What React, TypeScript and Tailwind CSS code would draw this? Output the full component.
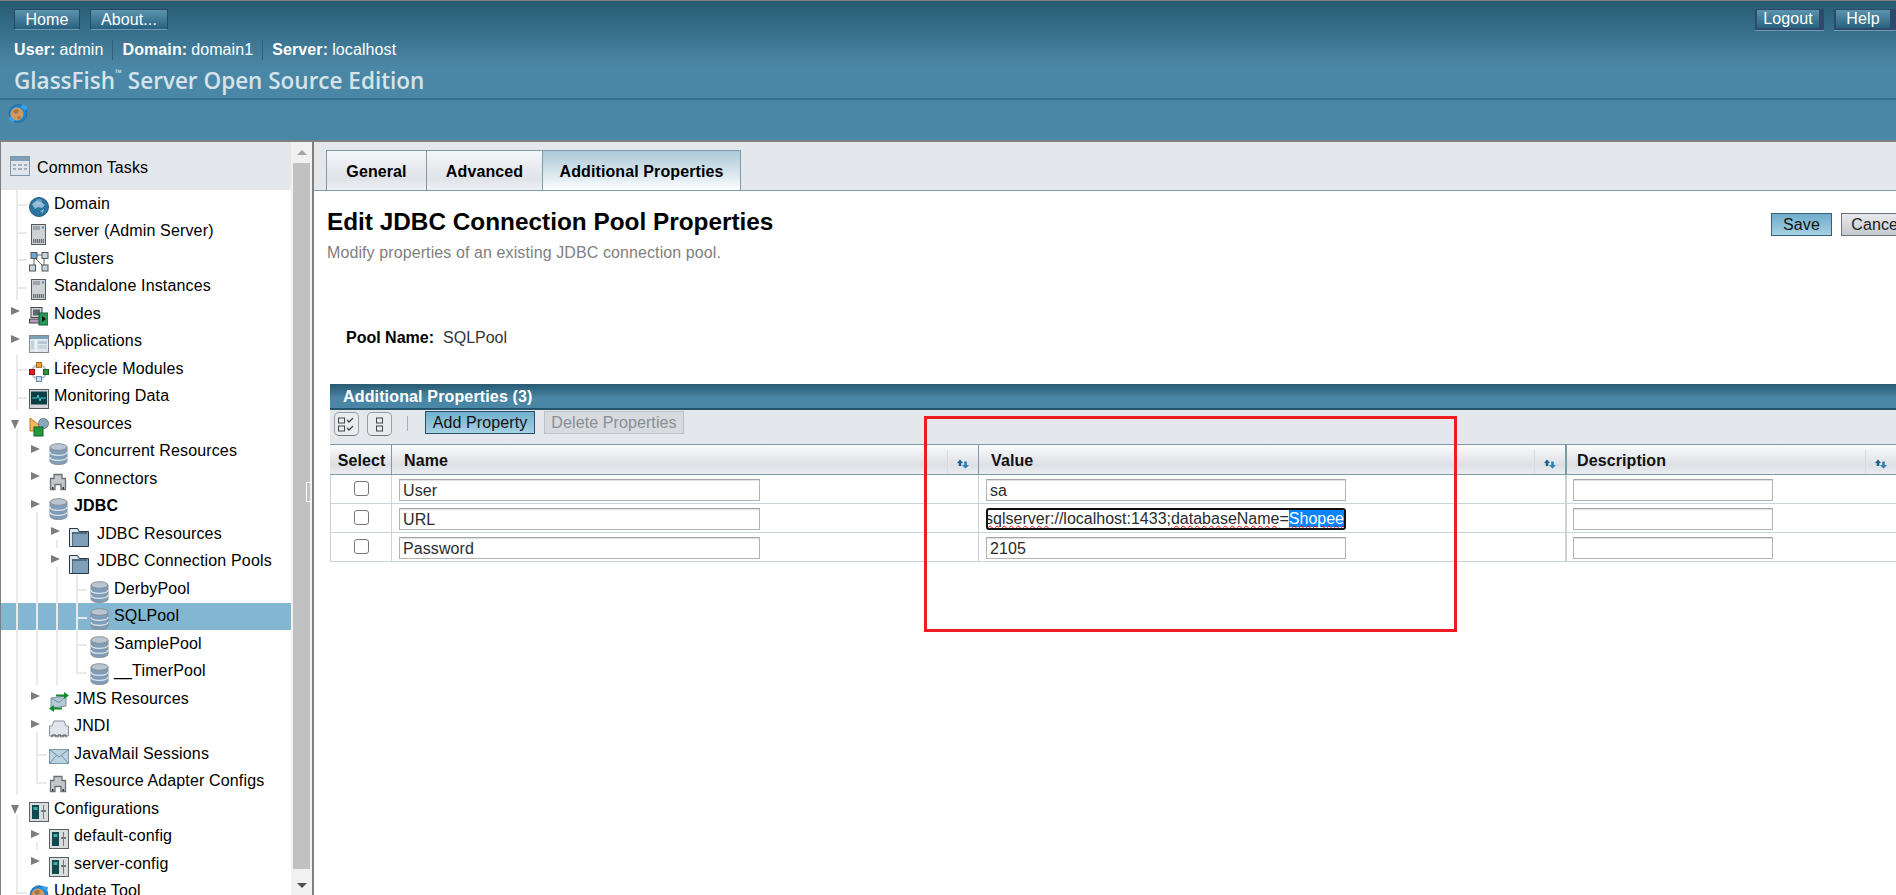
import React from "react";

const FONT = "font-['Liberation_Sans',Arial,sans-serif]";

function Db() {
  return (
    <svg width="19" height="22" viewBox="0 0 19 22">
      <path d="M1 4v14c0 2 3.500 3.500 8.500 3.500S18 20 18 18V4z" fill="#7f9cb8" stroke="#8a8f94" />
      <ellipse cx="9.500" cy="4" rx="8.500" ry="3.300" fill="#b8c6d4" stroke="#8a8f94" />
      <path d="M1 9c0 2 3.500 3.300 8.500 3.300S18 11 18 9M1 14c0 2 3.500 3.300 8.500 3.300S18 16 18 14" fill="none" stroke="#dde5ec" strokeWidth="1.200" />
    </svg>
  );
}
function Globe() {
  return (
    <svg width="20" height="20" viewBox="0 0 20 20">
      <circle cx="10" cy="10" r="9.500" fill="#2c74a0" stroke="#245d80" />
      <path d="M3 7l4-3 5 1 4 3-3 3-4-1-3 2zM11 14l4-2-1 4z" fill="#8fbbd4" />
      <circle cx="10" cy="5" r="3" fill="#a8cce0" opacity=".5" />
    </svg>
  );
}
function ServerBox() {
  return (
    <svg width="15" height="21" viewBox="0 0 15 21" className="ml-[2px]">
      <rect x=".5" y=".5" width="14" height="20" fill="#cfd2d5" stroke="#55595d" />
      <path d="M2 3h7M2 5h7" stroke="#777" />
      <rect x="11" y="2.500" width="2" height="2" fill="#4a87c0" />
      <rect x="2" y="15" width="11" height="4" fill="#6d7175" />
      <path d="M3.500 15v4M5.500 15v4M7.500 15v4M9.500 15v4M11.500 15v4" stroke="#c8c8c8" strokeWidth=".7" />
    </svg>
  );
}
function ClustersI() {
  return (
    <svg width="20" height="20" viewBox="0 0 20 20">
      <path d="M5 6v8M7 3h7M6 6l8 8M15 6v8" stroke="#666" fill="none" />
      <rect x="2" y=".5" width="6" height="6" fill="#6da4d0" stroke="#555" />
      <rect x="13" y=".5" width="6" height="6" fill="#c8d4dc" stroke="#555" />
      <rect x=".5" y="13" width="6" height="6" fill="#c8d4dc" stroke="#555" />
      <rect x="13" y="13" width="6" height="6" fill="#c8d4dc" stroke="#555" />
    </svg>
  );
}
function NodesI() {
  return (
    <svg width="19" height="19" viewBox="0 0 19 19">
      <rect x="2" y=".5" width="11" height="10" fill="#d4d6d8" stroke="#444" />
      <rect x="4" y="2.500" width="7" height="6" fill="#5c6670" />
      <rect x=".5" y="12" width="12" height="4" fill="#b49ac4" stroke="#444" />
      <rect x="10" y="6" width="9" height="12" fill="#28995a" stroke="#175c36" />
      <path d="M13 9l4 3-4 3z" fill="#111" />
    </svg>
  );
}
function AppsI() {
  return (
    <svg width="20" height="18" viewBox="0 0 20 18">
      <rect x=".5" y=".5" width="19" height="17" fill="#dfe6ec" stroke="#858a8f" />
      <rect x="1" y="1" width="18" height="3" fill="#7c9fba" />
      <path d="M7 4v13" stroke="#fff" />
      <rect x="2" y="6" width="3" height="8" fill="#c2d0da" />
      <rect x="9" y="6" width="9" height="3" fill="#b6c9d8" />
      <rect x="9" y="10" width="9" height="4" fill="#c8d6e0" />
    </svg>
  );
}
function LifecycleI() {
  return (
    <svg width="20" height="20" viewBox="0 0 20 20">
      <circle cx="10" cy="10" r="7" fill="none" stroke="#b8c4cc" strokeWidth="2" />
      <rect x="7.500" y=".5" width="5" height="5" fill="#f0a030" stroke="#a87020" />
      <rect x=".5" y="7.500" width="5" height="5" fill="#e02020" stroke="#901010" />
      <rect x="14.500" y="7.500" width="5" height="5" fill="#309040" stroke="#206028" />
      <rect x="7.500" y="14.500" width="5" height="5" fill="#c8dce8" stroke="#6a8ea8" />
    </svg>
  );
}
function MonitorI() {
  return (
    <svg width="20" height="20" viewBox="0 0 20 20">
      <rect x=".5" y=".5" width="19" height="19" fill="#d2d5d6" stroke="#55595c" />
      <rect x="2" y="2.500" width="16" height="13" fill="#0c3c44" />
      <path d="M3 9h5l1-3 2 6 1-3h5" fill="none" stroke="#40d0d0" />
    </svg>
  );
}
function ResourcesI() {
  return (
    <svg width="20" height="20" viewBox="0 0 20 20">
      <path d="M1 1l9 7v6H1z" fill="#f0b860" stroke="#b87820" />
      <circle cx="14.500" cy="6.500" r="5" fill="#8aa8c0" stroke="#6a7a88" />
      <rect x="5" y="10" width="9" height="9" fill="#1e9a3c" stroke="#106024" />
    </svg>
  );
}
function ConnectorI() {
  return (
    <svg width="18" height="18" viewBox="0 0 18 18">
      <path d="M5 1.500h8v4h3.500v11h-4.500v-5H6v5H1.500v-11H5z" fill="#c4c8cc" stroke="#6c7074" strokeWidth="1.300" />
      <path d="M3 15h1.500M13.500 15H15" stroke="#333" strokeWidth="2" />
    </svg>
  );
}
function FolderI() {
  return (
    <svg width="20" height="20" viewBox="0 0 20 20">
      <path d="M.5 19.500V1.500h8l2 3h9v15z" fill="#7f9fb8" stroke="#26384a" />
      <path d="M3 19V6h15" fill="none" stroke="#26384a" />
      <path d="M1 2h7l1.500 3H3v14H1z" fill="#dfe6ea" />
    </svg>
  );
}
function JmsI() {
  return (
    <svg width="20" height="20" viewBox="0 0 20 20">
      <path d="M2 6l15-2v10L2 16z" fill="#b5cad8" stroke="#7a8f9e" />
      <path d="M2.500 6.500l7.500 4 6.500-6" fill="none" stroke="#7a8f9e" />
      <path d="M7 2.500h8V0l5 3.500-5 3.500V4.500H7z" fill="#128a2a" />
      <path d="M13 15.500H5V13L0 16.500 5 20v-2.500h8z" fill="#128a2a" />
    </svg>
  );
}
function JndiI() {
  return (
    <svg width="20" height="19" viewBox="0 0 20 19">
      <path d="M5 1h10l2 5h2.500v10H.5V6H3z" fill="#dfe5ea" stroke="#8a9198" />
      <path d="M3 17.500V15h4v2.500M9 17.500V15h3v2.500M14 17.500V15h3v2.500" fill="none" stroke="#555" />
    </svg>
  );
}
function MailI() {
  return (
    <svg width="20" height="15" viewBox="0 0 20 15">
      <rect x=".5" y=".5" width="19" height="14" fill="#bcd2e0" stroke="#7a98ac" />
      <path d="M1 1l9 7 9-7M1 14l6.500-7.500M19 14l-6.500-7.500" fill="none" stroke="#6f8da2" />
    </svg>
  );
}
function ConfigI() {
  return (
    <svg width="20" height="20" viewBox="0 0 20 20">
      <rect x=".5" y=".5" width="19" height="19" fill="#d9dcdd" stroke="#5c6063" />
      <rect x="3" y="3" width="7" height="14" fill="#0e4a50" />
      <rect x="4.500" y="5" width="4" height="3" fill="#3ab0a8" />
      <path d="M14.500 3v14" stroke="#777" />
      <rect x="12" y="8" width="5" height="2" fill="#777" />
    </svg>
  );
}
function UpdateI() {
  return (
    <svg width="20" height="19" viewBox="0 0 20 19">
      <circle cx="10" cy="9.500" r="8.800" fill="#1b87d6" stroke="#1a5f94" strokeWidth=".8" />
      <circle cx="9" cy="10" r="6.500" fill="#cf9a62" />
      <path d="M5 7l3-2 3 1-1 3-3 1zM9 13l3-1 1 2-3 1z" fill="#a87440" />
      <path d="M14 1l5 1-1 5-2-2-3-1zM5 18l-4-2 1-4 2 2 3 2z" fill="#35a5ec" />
    </svg>
  );
}
function TasksI() {
  return (
    <svg width="20" height="20" viewBox="0 0 20 20">
      <rect x=".5" y=".5" width="19" height="19" fill="#dfe5ea" stroke="#7d97aa" />
      <rect x="1" y="1" width="18" height="4" fill="#7f9fb8" />
      <path d="M3 8h3v2H3zM8 8h4v2H8zM14 8h3v2h-3zM3 12h3v2H3zM8 12h4v2H8zM14 12h3v2h-3z" fill="#a4aeb6" />
    </svg>
  );
}
function Sort() {
  return (
    <svg width="12" height="10" viewBox="0 0 12 10">
      <path d="M3 .5L6 4H4.300v3H1.700V4H0z" fill="#1a5f92" />
      <path d="M8.500 9.500L12 6h-2.200V2.500H7.200V6H5z" fill="#2a80b8" />
    </svg>
  );
}

type R = {
  t: string;
  l: number;
  i: React.ReactNode;
  a?: "r" | "d";
  v?: number[];
  h?: number[];
  b?: number[];
  tick?: number;
  bold?: boolean;
  sel?: boolean;
};

const rows: R[] = [
  { t: "Domain", l: 0, i: <Globe />, v: [15], tick: 15 },
  { t: "server (Admin Server)", l: 0, i: <ServerBox />, v: [15], tick: 15 },
  { t: "Clusters", l: 0, i: <ClustersI />, v: [15], tick: 15 },
  { t: "Standalone Instances", l: 0, i: <ServerBox />, v: [15], tick: 15 },
  { t: "Nodes", l: 0, i: <NodesI />, a: "r" },
  { t: "Applications", l: 0, i: <AppsI />, a: "r" },
  { t: "Lifecycle Modules", l: 0, i: <LifecycleI />, v: [15], tick: 15 },
  { t: "Monitoring Data", l: 0, i: <MonitorI />, v: [15], tick: 15 },
  { t: "Resources", l: 0, i: <ResourcesI />, a: "d", b: [15] },
  { t: "Concurrent Resources", l: 1, i: <Db />, a: "r", v: [15] },
  { t: "Connectors", l: 1, i: <ConnectorI />, a: "r", v: [15] },
  { t: "JDBC", l: 1, i: <Db />, a: "r", v: [15], b: [35], bold: true },
  { t: "JDBC Resources", l: 2, i: <FolderI />, a: "r", v: [15, 35], b: [55] },
  { t: "JDBC Connection Pools", l: 2, i: <FolderI />, a: "r", v: [15, 35], b: [55] },
  { t: "DerbyPool", l: 3, i: <Db />, v: [15, 35, 55, 75], tick: 75 },
  { t: "SQLPool", l: 3, i: <Db />, v: [15, 35, 55, 75], tick: 75, sel: true },
  { t: "SamplePool", l: 3, i: <Db />, v: [15, 35, 55, 75], tick: 75 },
  { t: "__TimerPool", l: 3, i: <Db />, v: [15, 35, 55], h: [75], tick: 75 },
  { t: "JMS Resources", l: 1, i: <JmsI />, a: "r", v: [15] },
  { t: "JNDI", l: 1, i: <JndiI />, a: "r", v: [15], b: [35] },
  { t: "JavaMail Sessions", l: 1, i: <MailI />, v: [15, 35], tick: 35 },
  { t: "Resource Adapter Configs", l: 1, i: <ConnectorI />, v: [15], h: [35], tick: 35 },
  { t: "Configurations", l: 0, i: <ConfigI />, a: "d", v: [], b: [15] },
  { t: "default-config", l: 1, i: <ConfigI />, a: "r", v: [15], b: [35] },
  { t: "server-config", l: 1, i: <ConfigI />, a: "r", v: [15] },
  { t: "Update Tool", l: 0, i: <UpdateI />, h: [15], tick: 15 },
];

const PAD = ["pl-[28px]", "pl-[48px]", "pl-[68px]", "pl-[89px]"];
const BOX = ["w-[25px]", "w-[25px]", "w-[28px]", "w-[24px]"];
const ARROW = ["left-[10px]", "left-[30px]", "left-[50px]", "left-[70px]"];
const LINE = "absolute w-[2px] bg-[#e7e9eb]";

function TreeRow({ r }: { r: R }) {
  return (
    <div className={`relative h-[27.5px] shrink-0 flex items-center ${PAD[r.l]} ${r.sel ? "bg-[#83b7d1]" : ""}`}>
      {r.v?.map((x) => (
        <span key={x} className={`${LINE} top-0 bottom-0`} style={{ left: x }} />
      ))}
      {r.h?.map((x) => (
        <span key={x} className={`${LINE} top-0 h-[15px]`} style={{ left: x }} />
      ))}
      {r.b?.map((x) => (
        <span key={x} className={`${LINE} bottom-0 h-[8px]`} style={{ left: x }} />
      ))}
      {r.tick !== undefined && (
        <span className="absolute h-[2px] top-[14px] bg-[#e7e9eb] w-[11px]" style={{ left: r.tick }} />
      )}
      {r.a === "r" && (
        <span className={`absolute ${ARROW[r.l]} top-[7px] border-l-[9px] border-l-[#7d7d7d] border-y-[4.500px] border-y-transparent`} />
      )}
      {r.a === "d" && (
        <span className={`absolute ${ARROW[r.l]} top-[10px] border-t-[9px] border-t-[#7d7d7d] border-x-[4.500px] border-x-transparent`} />
      )}
      <span className={`relative ${BOX[r.l]} shrink-0 translate-y-[3px] flex items-center`}>{r.i}</span>
      <span className={`text-[16px] tracking-[0.15px] whitespace-nowrap text-black ${r.bold ? "font-bold" : ""}`}>{r.t}</span>
    </div>
  );
}

function HeadBtn({ t, w }: { t: string; w: string }) {
  return (
    <button className={`${w} h-[21px] border border-[#2c4560] border-b-[#6d9ab5] bg-[linear-gradient(#5b94ae,#28607f)] text-white text-[16px] leading-[19px] text-center`}>
      {t}
    </button>
  );
}

function HeadBtnDark({ t, w, inner }: { t: string; w: string; inner: string }) {
  return (
    <div className={`${w} h-[22px] bg-[#30496a] border-b border-[#6d9ab5] flex pl-[2px] pt-[1px]`}>
      <button className={`${inner} h-[18px] bg-[linear-gradient(#5b94ae,#28607f)] text-white text-[16px] leading-[18px] text-center`}>
        {t}
      </button>
    </div>
  );
}

function Tab({ t, w, active }: { t: string; w: string; active?: boolean }) {
  return (
    <div
      className={`${w} h-[40px] border-l border-t border-[#7b9ca8] flex items-center justify-center font-bold text-[16px] text-black pt-[2px] ${
        active ? "bg-[linear-gradient(#acc8d8,#e6f0f4_75%,#ffffff)] border-r" : "bg-[linear-gradient(#f6f7f9,#dfe2e7_70%,#eef0f3)]"
      }`}
    >
      {t}
    </div>
  );
}

function HeaderCell({ t, className, pad, sort }: { t: string; className?: string; pad?: string; sort?: boolean }) {
  return (
    <div className={`flex items-stretch justify-between font-bold text-[16px] text-[#111] ${className ?? ""}`}>
      <span className={`self-center pt-[2px] ${pad ?? "pl-[12px]"}`}>{t}</span>
      {sort && (
        <span className="mt-[5px] w-[31px] border-l border-[#d8dbe0] flex items-center justify-center shrink-0 pt-[3px]">
          <Sort />
        </span>
      )}
    </div>
  );
}

function TextBox({ v, className }: { v?: string; className?: string }) {
  return (
    <input
      readOnly
      defaultValue={v}
      className={`h-[22px] border border-[#b2b4b6] border-t-[#a2a4a6] bg-white pl-[3px] pt-[1px] text-[16px] text-[#2b2b2b] shadow-[inset_0_1px_1px_#e0e0e0] outline-none ${className ?? ""}`}
    />
  );
}

function Check() {
  return <input type="checkbox" readOnly className="appearance-none mb-[2px] w-[15px] h-[15px] rounded-[3px] border border-[#767676] bg-white" />;
}

const CELL = "h-[29px] flex items-center border-b border-[#c9d3d8]";
const WAVY = "underline decoration-wavy decoration-[#f00000] decoration-1";

function Row({ name, value, url }: { name: string; value?: string; url?: boolean }) {
  return (
    <div className="grid grid-cols-[61px_587px_588px_1fr]">
      <div className={`${CELL} justify-center border-r border-[#c9d3d8]`}>
        <Check />
      </div>
      <div className={`${CELL} pt-[2px] pl-[7px] border-r border-[#c9d3d8]`}>
        <TextBox v={name} className="w-[361px]" />
      </div>
      <div className={`${CELL} pt-[2px] pl-[7px] border-r-2 border-r-[#c9d3d8]`}>
        {url ? (
          <div className="w-[360px] h-[22px] border-2 border-[#111] rounded-[3px] bg-white overflow-hidden flex justify-end items-center text-[16px] tracking-normal text-[#2b2b2b]">
            <span className="shrink-0 whitespace-nowrap">
              jdbc:<span className={WAVY}>sqlserver</span>://localhost:1433;<span className={WAVY}>databaseName</span>=<span className={`bg-[#0a84ff] text-white ${WAVY}`}>Shopee</span>
            </span>
          </div>
        ) : (
          <TextBox v={value} className="w-[360px]" />
        )}
      </div>
      <div className={`${CELL} pt-[2px] pl-[6px]`}>
        <TextBox className="w-[200px]" />
      </div>
    </div>
  );
}

export default function App() {
  return (
    <div className={`relative w-[1896px] h-[895px] overflow-hidden bg-white flex flex-col tracking-[0.1px] ${FONT}`}>
      {/* masthead */}
      <header className="h-[142px] shrink-0 flex flex-col border-t border-[#808080] border-b-[2px] border-b-[#808080] bg-[linear-gradient(#265a72_0px,#4a87a6_66px,#4a87a6_100%)]">
        <div className="h-[99px] shrink-0 border-b-2 border-b-[#336f8a] pl-[14px] pt-[8px] flex flex-col">
          <div className="flex justify-between">
            <div className="flex gap-[10px]">
              <HeadBtn t="Home" w="w-[66px]" />
              <HeadBtn t="About..." w="w-[78px]" />
            </div>
            <div className="flex gap-[10px]">
              <HeadBtnDark t="Logout" w="w-[69px]" inner="w-[62px]" />
              <HeadBtnDark t="Help" w="w-[62px]" inner="w-[54px]" />
            </div>
          </div>
          <div className="mt-[9px] flex items-center text-[16px] text-white leading-[20px] h-[20px]">
            <span className="font-bold">User:</span>
            <span className="ml-[4px] pr-[9px] border-r border-[#2f607a]">admin</span>
            <span className="ml-[9px] font-bold">Domain:</span>
            <span className="ml-[4px] pr-[9px] border-r border-[#2f607a]">domain1</span>
            <span className="ml-[9px] font-bold">Server:</span>
            <span className="ml-[4px]">localhost</span>
          </div>
          <div className="mt-[7px] font-['Open_Sans',sans-serif] font-semibold text-[22.500px] tracking-normal leading-[28px] text-[#d6e3ea] whitespace-nowrap">
            GlassFish<sup className="text-[9px] align-[9px] leading-none">™</sup> Server Open Source Edition
          </div>
        </div>
        <div className="pl-[8px] pt-[4px]">
          <UpdateI />
        </div>
      </header>

      <div className="flex-1 flex min-h-0">
        {/* tree */}
        <aside className="w-[291px] shrink-0 border-l border-[#808080] flex flex-col overflow-hidden">
          <div className="h-[48px] shrink-0 bg-[#e4e8ec] flex items-center pl-[9px] gap-[7px] text-[16px] text-black">
            <TasksI />
            <span className="relative top-[2px]">Common Tasks</span>
          </div>
          {rows.map((r) => (
            <TreeRow key={r.t} r={r} />
          ))}
        </aside>
        {/* scrollbar */}
        <div className="relative w-[21px] shrink-0 bg-[#f1f1f1] flex flex-col items-center">
          <span className="mt-[8px] border-b-[5px] border-b-[#a3a3a3] border-x-[5px] border-x-transparent" />
          <div className="mt-[8px] w-[17px] h-[706px] bg-[#c1c1c1]" />
          <span className="mt-[14px] border-t-[5px] border-t-[#505050] border-x-[5px] border-x-transparent" />
          <span className="absolute right-0 top-[340px] w-[6px] h-[20px] border border-white border-r-0" />
        </div>
        <div className="w-[2px] shrink-0 bg-[#808080]" />

        {/* content */}
        <main className="flex-1 min-w-0 overflow-hidden">
          <div className="h-[49px] bg-[#e4e8ec] border-b border-[#7b9ca8] pl-[12px] pt-[8px] flex">
            <Tab t="General" w="w-[100px]" />
            <Tab t="Advanced" w="w-[116px]" />
            <Tab t="Additional Properties" w="w-[199px]" active />
          </div>
          <div className="pl-[13px] flex items-start justify-between mr-[-16px]">
            <div>
              <h1 className="mt-[17px] font-bold text-[24.350px] tracking-normal leading-[28px] text-black">Edit JDBC Connection Pool Properties</h1>
              <p className="mt-[7px] text-[16px] leading-[20px] text-[#808080]">Modify properties of an existing JDBC connection pool.</p>
            </div>
            <div className="mt-[22px] flex gap-[9px]">
              <button className="w-[61px] h-[23px] border border-[#35607a] bg-[linear-gradient(#6faccb,#a6d1e3)] text-[16px] leading-[20px] text-[#111]">Save</button>
              <button className="w-[71px] h-[23px] border border-[#6e7278] bg-[linear-gradient(#e8e9ec,#c6c9d0)] text-[16px] leading-[20px] text-[#222]">Cancel</button>
            </div>
          </div>
          <div className="mt-[65px] pl-[32px] flex items-center h-[20px] text-[16px]">
            <span className="font-bold text-black tracking-normal">Pool Name:</span>
            <span className="ml-[9px] text-[#333] tracking-normal">SQLPool</span>
          </div>

          <section className="mt-[36px] ml-[16px]">
            <div className="h-[26px] pl-[13px] pt-[2px] flex items-center font-bold text-[16px] tracking-[0.15px] text-white border-b-2 border-[#24556b] bg-[linear-gradient(#285a72,#4a87a6_60%)]">
              Additional Properties (3)
            </div>
            <div className="h-[34px] bg-[#e4e8ec] flex items-start pl-[4px]">
              <button className="mt-[2px] w-[25px] h-[24px] rounded-[5px] border border-[#9a9da0] border-b-[#777] bg-[#e9ebee] flex items-center justify-center">
                <svg width="17" height="15" viewBox="0 0 17 15" fill="none" stroke="#444">
                  <rect x=".5" y="1" width="6" height="5" />
                  <rect x=".5" y="9" width="6" height="5" />
                  <path d="M9 3l2 2 4-4M9 11l2 2 4-4" strokeWidth="1.300" />
                </svg>
              </button>
              <button className="ml-[8px] mt-[2px] w-[25px] h-[24px] rounded-[5px] border border-[#9a9da0] border-b-[#777] bg-[#e9ebee] flex items-center justify-center">
                <svg width="9" height="15" viewBox="0 0 9 15" fill="none" stroke="#444">
                  <rect x="1.500" y="1" width="6" height="5" />
                  <rect x="1.500" y="9" width="6" height="5" />
                </svg>
              </button>
              <span className="ml-[15px] mt-[6px] w-[1px] h-[15px] bg-[#a8adb2]" />
              <button className="ml-[17px] mt-[1px] w-[110px] h-[23px] border border-[#26506a] bg-[linear-gradient(#70afcd,#a6d1e3)] text-[16px] leading-[20px] text-[#111]">Add Property</button>
              <button className="ml-[9px] mt-[1px] w-[140px] h-[23px] border border-[#bdc2c6] bg-[#d7dadf] text-[16px] leading-[20px] text-[#898e94]">Delete Properties</button>
            </div>
            <div className="grid grid-cols-[62px_587px_588px_1fr] h-[31px] border-y border-[#7b9ca8] bg-[linear-gradient(#fbfbfc,#dcdfe4_70%,#ebedf0)]">
              <div className="border-r border-[#7b9ca8] flex items-center justify-center font-bold text-[16px] text-[#111] pl-[2px] pt-[2px]">Select</div>
              <HeaderCell t="Name" sort className="border-r border-[#7b9ca8]" />
              <HeaderCell t="Value" sort className="border-r-2 border-r-[#7b9ca8]" />
              <HeaderCell t="Description" sort pad="pl-[10px]" />
            </div>
            <div className="border-l border-[#c9d3d8]">
              <Row name="User" value="sa" />
              <Row name="URL" url />
              <Row name="Password" value="2105" />
            </div>
          </section>
        </main>
      </div>

      {/* red annotation */}
      <div className="absolute left-[924px] top-[416px] w-[533px] h-[216px] border-[3px] border-[#ed1c24]" />
    </div>
  );
}
